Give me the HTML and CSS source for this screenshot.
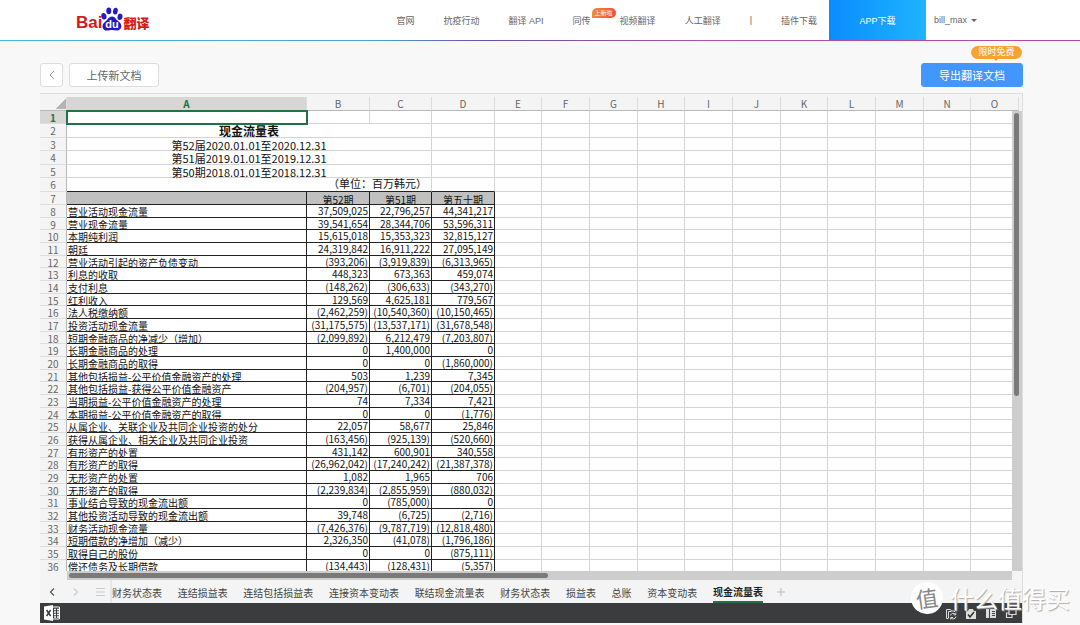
FILE: index.html
```html
<!DOCTYPE html>
<html lang="zh-CN">
<head>
<meta charset="utf-8">
<title>百度翻译</title>
<link rel="stylesheet" href="styles.css">
</head>
<body>
<header class="topbar">
  <a class="logo" href="#" aria-label="百度翻译">
    <span class="logo-bai">Bai</span>
    <svg class="logo-paw" viewBox="0 0 22 24" width="22" height="24" aria-hidden="true">
      <g fill="#2319c8">
        <ellipse cx="2.9" cy="9.3" rx="2.6" ry="3.3" transform="rotate(-12 2.9 9.3)"/>
        <ellipse cx="7.8" cy="3.8" rx="2.5" ry="3.4"/>
        <ellipse cx="14.4" cy="4.2" rx="2.4" ry="3.4" transform="rotate(10 14.4 4.2)"/>
        <ellipse cx="19" cy="9.8" rx="2.5" ry="3.2" transform="rotate(8 19 9.8)"/>
        <path d="M11 9.500c2 0 3.200 1.300 4.200 2.800 1.300 1.900 5.200 3.200 5.200 7 0 2.700-2 4.200-4.500 4.200-1.800 0-3.200-.5-4.900-.5s-3 .6-5 .6c-2.600 0-4.500-1.500-4.500-4.200 0-3.700 3.300-4.700 5-7 1.100-1.500 2.300-2.900 4.500-2.900z"/>
      </g>
      <text class="logo-du" x="11" y="21" text-anchor="middle">du</text>
    </svg>
    <span class="logo-fanyi">翻译</span>
  </a>
  <nav class="nav">
    <a href="#">官网</a>
    <a href="#">抗疫行动</a>
    <a href="#">翻译 API</a>
    <a class="has-tag" href="#">同传<span class="tag">上新啦</span></a>
    <a href="#">视频翻译</a>
    <a href="#">人工翻译</a>
    <span class="bar">|</span>
    <a href="#">插件下载</a>
  </nav>
  <a class="app-link" href="#">APP下载</a>
  <button class="user" type="button">bill_max<span class="caret"></span></button>
</header>

<main class="page">
  <div class="toolbar">
    <button class="btn back" type="button" aria-label="返回">
      <svg viewBox="0 0 8 10" width="8" height="10"><path d="M6 1 2 5l4 4" fill="none" stroke="#999" stroke-width="1"/></svg>
    </button>
    <button class="btn upload" type="button">上传新文档</button>
    <div class="export-wrap">
      <span class="free">限时免费</span>
      <button class="btn export" type="button">导出翻译文档</button>
    </div>
  </div>

  <section class="frame">
    <div class="viewport">
      <table class="sheet" id="sheet"></table>
      <div class="vbar"><div class="vthumb"></div></div>
    </div>
    <div class="hrow"><div class="hbar"><div class="hthumb"></div></div></div>
    <div class="tabbar">
      <div class="tab-tools">
        <button type="button" aria-label="上一个"><svg viewBox="0 0 8 10" width="8" height="10"><path d="M6 1.500 2.500 5 6 8.500" fill="none" stroke="#555" stroke-width="1.200"/></svg></button>
        <button type="button" aria-label="下一个"><svg viewBox="0 0 8 10" width="8" height="10"><path d="M2 1.500 5.500 5 2 8.500" fill="none" stroke="#ccc" stroke-width="1.200"/></svg></button>
        <button type="button" aria-label="工作表列表"><svg viewBox="0 0 10 10" width="10" height="10"><path d="M0 1.500h9M0 5h9M0 8.500h9" stroke="#ccc"/></svg></button>
      </div>
      <div class="tabs">
        <button type="button">财务状态表</button>
        <button type="button">连结损益表</button>
        <button type="button">连结包括损益表</button>
        <button type="button">连接资本变动表</button>
        <button type="button">联结现金流量表</button>
        <button type="button">财务状态表</button>
        <button type="button">损益表</button>
        <button type="button">总账</button>
        <button type="button">资本变动表</button>
        <button type="button" class="active">现金流量表</button>
      </div>
      <button class="add" type="button" aria-label="新建工作表"><svg viewBox="0 0 8 8" width="8" height="8"><path d="M4 0v8M0 4h8" stroke="#bbb"/></svg></button>
    </div>
    <footer class="status">
      <svg class="excel" viewBox="0 0 16 16" width="16" height="16">
        <path d="M0 1.600 9 0v16L0 14.400z" fill="#fff"/>
        <path d="M2.600 5l4 6M6.600 5l-4 6" stroke="#3a3c3e" stroke-width="1.500"/>
        <path d="M9 2h6.500v12H9" fill="none" stroke="#fff"/>
        <path d="M10 4.500h2M13 4.500h2M10 7h2M13 7h2M10 9.500h2M13 9.500h2M10 12h2M13 12h2" stroke="#fff" stroke-width="1.300"/>
      </svg>
      <div class="status-icons">
        <svg viewBox="0 0 12 12" width="12" height="12" fill="none" stroke="#ddd"><path d="M3.500 10.500h-2v-9h4l1 1.500h3v1"/><path d="M3.500 10V3.500h3"/><path d="M5.500 7.500a2.800 2.800 0 0 1 5-1M10.800 4.800v2H8.500M11 8.500a2.800 2.800 0 0 1-5 1.300M5.700 11.500v-2H8"/></svg>
        <svg viewBox="0 0 12 12" width="12" height="12"><path d="M1 3h2l1-2h4l1 2h2v8H1z" fill="#ddd"/><path d="m3 6.500 2 2.500 4-5" fill="none" stroke="#333" stroke-width="1.500"/></svg>
        <svg viewBox="0 0 12 12" width="12" height="12"><path d="M1 1h3v9H1zM5 1h6v9H5z" fill="#ddd"/><path d="M7 3.500h3M7 5.500h3M7 7.500h3" stroke="#444"/></svg>
        <svg viewBox="0 0 12 12" width="12" height="12" fill="none" stroke="#ddd" stroke-width="1.200"><path d="M4 1.500h7v5H4z"/><path d="M4 5H1.500v4.500H7V7"/></svg>
      </div>
    </footer>
  </section>
</main>

<div class="watermark"><span class="wm-mark">值</span><span class="wm-text">什么值得买</span></div>
<script src="sheet.js"></script>
</body>
</html>
```
FILE: styles.css
```css
* { box-sizing: border-box; }

body {
  margin: 0;
  height: 100vh;
  display: flex;
  flex-direction: column;
  background: #f8f8f8;
  color: #333;
  font-family: "Liberation Sans", "Noto Sans CJK SC", sans-serif;
  font-size: 10px;
  position: relative;
  overflow: hidden;
}

button {
  font: inherit;
  color: inherit;
  background: none;
  border: 0;
  padding: 0;
  white-space: nowrap;
}

a { color: inherit; text-decoration: none; }
svg { display: block; }

/* Top bar */
.topbar {
  flex: none;
  height: 41px;
  display: flex;
  background: #fff;
  border-bottom: 1px solid;
  border-image: linear-gradient(90deg, #45b8d8, #4aa0cc 35%, #6c4fa0 45%, #a855a8 65%, #b0489e) 1;
  font-size: 9px;
  color: #666;
}

.logo {
  display: flex;
  align-items: flex-end;
  padding: 0 0 9px 76px;
  color: #d7191c;
  font-weight: bold;
}
.logo-bai { font-size: 17px; line-height: 16px; }
.logo-paw { margin-left: -1px; }
.logo-du { font-size: 11px; fill: #fff; }
.logo-fanyi { font-size: 13px; line-height: 15px; font-weight: 900; }

.nav {
  margin-left: auto;
  padding-right: 12px;
  display: flex;
  align-items: center;
  gap: 29px;
  white-space: nowrap;
}
.has-tag { position: relative; }
.tag {
  position: absolute;
  left: 19px;
  top: -6px;
  width: 24px;
  height: 10px;
  border-radius: 5px 5px 5px 0;
  background: linear-gradient(90deg, #f58a3c, #ee4f3a);
  color: #fff;
  font-size: 6px;
  line-height: 10px;
  text-align: center;
}

.app-link {
  width: 97px;
  display: flex;
  align-items: center;
  justify-content: center;
  background: linear-gradient(90deg, #0a8cff, #1eb4ff);
  color: #fff;
}

.user {
  width: 154px;
  padding-left: 8px;
  display: flex;
  align-items: center;
  gap: 4px;
}
.caret {
  border: 3px solid transparent;
  border-top-color: #666;
  border-bottom: 0;
}

/* Document page */
.page {
  flex: 1;
  min-height: 0;
  display: flex;
  flex-direction: column;
  padding: 22px 57px 2px 40px;
}

.toolbar {
  flex: none;
  display: flex;
  gap: 6px;
  margin-bottom: 6px;
}
.btn {
  height: 24px;
  border-radius: 3px;
  border: 1px solid #ddd;
  background: #fff;
  color: #666;
  font-size: 11px;
}
.back {
  width: 23px;
  display: flex;
  align-items: center;
  justify-content: center;
}
.upload { width: 90px; }
.export-wrap { margin-left: auto; position: relative; }
.export {
  width: 102px;
  background: #4395ff;
  border-color: #4395ff;
  color: #fff;
}
.free {
  position: absolute;
  right: 1px;
  top: -17px;
  width: 51px;
  height: 13px;
  border-radius: 7px;
  background: #f5a52f;
  color: #fff;
  font-size: 9px;
  line-height: 13px;
  text-align: center;
}
.free::after {
  content: "";
  position: absolute;
  left: 23px;
  top: 13px;
  border: 2px solid transparent;
  border-top-color: #f5a52f;
  border-bottom: 0;
}

/* Spreadsheet */
.frame {
  flex: 1;
  min-height: 0;
  display: flex;
  flex-direction: column;
  padding-top: 3px;
  border-top: 1px solid #ddd;
  border-right: 1px solid #ddd;
  background: #f4f4f4;
  font-family: "Noto Sans CJK SC", sans-serif;
}
.viewport {
  flex: 1;
  min-height: 0;
  position: relative;
  overflow: hidden;
}

.sheet {
  width: 979px;
  table-layout: fixed;
  border-spacing: 0;
  color: #111;
}
.sheet th, .sheet td {
  padding: 0;
  white-space: nowrap;
  line-height: 11px;
  vertical-align: top;
  border-right: 1px solid #d4d4d4;
  border-bottom: 1px solid #d4d4d4;
}
.sheet td { background: #fff; }
.sheet th {
  color: #666;
  font-weight: normal;
  background: #f4f4f4;
  border-color: #ddd;
}
.sheet thead th {
  height: 14px;
  line-height: 13px;
  border-bottom-color: #b8b8b8;
}
.sheet tbody th {
  padding-top: 3px;
  line-height: 8px;
  border-right-color: #b8b8b8;
}
.sheet th.picked {
  background: #d6d6d4;
  color: #217346;
  font-weight: bold;
}
.sheet th.corner {
  background: linear-gradient(135deg, #f4f4f4 50%, #b4b4b4 50%) 16px 2px / 10px 10px no-repeat #f4f4f4;
}
.h12 { height: 12px; }
.h13 { height: 13px; }
.h14 { height: 14px; }

.sheet td.selected { outline: 2px solid #217346; outline-offset: -1px; position: relative; }
.sheet td.title { font-size: 12px; font-weight: bold; text-align: center; padding-top: 1px; line-height: 12px; }
.sheet td.period { font-size: 11px; text-align: center; padding-top: 2px; line-height: 10px; }
.sheet td.unit { font-size: 11px; text-align: right; padding-right: 4px; line-height: 10px; }
.sheet td.boxed { border-color: #222; }
.sheet td.top { border-bottom-color: #222; }
.sheet td.head { background: #c0c0c0; text-align: center; padding-top: 3px; line-height: 9px; }
.sheet td.label { padding: 3px 0 0 1px; line-height: 8px; }
.sheet td.num { padding-right: 1px; text-align: right; }

.vbar {
  position: absolute;
  right: 0;
  top: 14px;
  bottom: 0;
  width: 10px;
  padding: 2px;
  background: #cdcdcd;
}
.vthumb { width: 5px; height: 283px; border-radius: 3px; background: #7a7a7a; }

.hrow { flex: none; padding: 0 10px 0 27px; }
.hbar { height: 9px; padding: 2px; background: #cdcdcd; }
.hthumb { width: 479px; height: 5px; border-radius: 3px; background: #7a7a7a; }

/* Sheet tabs */
.tabbar { flex: none; height: 23px; display: flex; color: #444; }
.tab-tools {
  width: 72px;
  padding-left: 8px;
  display: flex;
  align-items: center;
  gap: 16px;
  border-right: 2px solid #e6e6e6;
}
.tabs { width: 651px; display: flex; justify-content: space-between; }
.tabs button { height: 23px; padding-top: 1px; }
.tabs .active { color: #222; font-weight: bold; border-bottom: 2px solid #217346; }
.add { margin-left: 14px; }

.status {
  flex: none;
  height: 20px;
  display: flex;
  align-items: center;
  justify-content: space-between;
  padding: 0 5px 0 4px;
  background: #3a3c3e;
}
.status-icons { display: flex; gap: 8px; padding-top: 2px; }

/* Watermark */
.watermark {
  position: absolute;
  right: 10px;
  bottom: 11px;
  display: flex;
  align-items: center;
  gap: 7px;
  color: #fff;
  font-family: "Noto Sans CJK SC", sans-serif;
  pointer-events: none;
}
.wm-mark {
  width: 32px;
  height: 32px;
  border-radius: 50%;
  background: #fff;
  color: #888;
  font-size: 22px;
  line-height: 31px;
  text-align: center;
  transform: rotate(-8deg);
}
.wm-text { font-size: 24px; line-height: 32px; text-shadow: 1px 1px 1px #aaa; }
```
FILE: sheet.js
```js
const widths = [27, 240, 63, 62, 63, 47, 48, 48, 47, 48, 48, 47, 48, 48, 47, 48];
const letters = "ABCDEFGHIJKLMNO".split("");

const merged = {
  2: ["title", "现金流量表"],
  3: ["period", "第52届2020.01.01至2020.12.31"],
  4: ["period", "第51届2019.01.01至2019.12.31"],
  5: ["period", "第50期2018.01.01至2018.12.31"],
  6: ["unit top", "（单位：百万韩元）"]
};

const rows = [
  ["营业活动现金流量", "37,509,025", "22,796,257", "44,341,217"],
  ["营业现金流量", "39,541,654", "28,344,706", "53,596,311"],
  ["本期纯利润", "15,615,018", "15,353,323", "32,815,127"],
  ["朝廷", "24,319,842", "16,911,222", "27,095,149"],
  ["营业活动引起的资产负债变动", "(393,206)", "(3,919,839)", "(6,313,965)"],
  ["利息的收取", "448,323", "673,363", "459,074"],
  ["支付利息", "(148,262)", "(306,633)", "(343,270)"],
  ["红利收入", "129,569", "4,625,181", "779,567"],
  ["法人税缴纳额", "(2,462,259)", "(10,540,360)", "(10,150,465)"],
  ["投资活动现金流量", "(31,175,575)", "(13,537,171)", "(31,678,548)"],
  ["短期金融商品的净减少（增加）", "(2,099,892)", "6,212,479", "(7,203,807)"],
  ["长期金融商品的处理", "0", "1,400,000", "0"],
  ["长期金融商品的取得", "0", "0", "(1,860,000)"],
  ["其他包括损益-公平价值金融资产的处理", "503", "1,239", "7,345"],
  ["其他包括损益-获得公平价值金融资产", "(204,957)", "(6,701)", "(204,055)"],
  ["当期损益-公平价值金融资产的处理", "74", "7,334", "7,421"],
  ["本期损益-公平价值金融资产的取得", "0", "0", "(1,776)"],
  ["从属企业、关联企业及共同企业投资的处分", "22,057", "58,677", "25,846"],
  ["获得从属企业、相关企业及共同企业投资", "(163,456)", "(925,139)", "(520,660)"],
  ["有形资产的处置", "431,142", "600,901", "340,558"],
  ["有形资产的取得", "(26,962,042)", "(17,240,242)", "(21,387,378)"],
  ["无形资产的处置", "1,082", "1,965", "706"],
  ["无形资产的取得", "(2,239,834)", "(2,855,959)", "(880,032)"],
  ["事业结合导致的现金流出额", "0", "(785,000)", "0"],
  ["其他投资活动导致的现金流出额", "39,748", "(6,725)", "(2,716)"],
  ["财务活动现金流量", "(7,426,376)", "(9,787,719)", "(12,818,480)"],
  ["短期借款的净增加（减少）", "2,326,350", "(41,078)", "(1,796,186)"],
  ["取得自己的股份", "0", "0", "(875,111)"],
  ["偿还债务及长期借款", "(134,443)", "(128,431)", "(5,357)"]
];

const td = (cls, text, span) =>
  `<td class="${cls}"${span ? ` colspan="${span}"` : ""}>${text}</td>`;
const empty = n => "<td></td>".repeat(n);

function rowHeight(r) {
  if (r < 7) return r % 2 ? 13 : 14;
  return r > 7 && (r - 8) % 3 === 1 ? 12 : 13;
}

function cells(r) {
  if (r === 1) return td("selected", "") + empty(14);
  if (merged[r]) return td(merged[r][0], merged[r][1], 3) + (r === 6 ? td("top", "") : empty(1)) + empty(11);
  if (r === 7) return ["", "第52期", "第51期", "第五十期"].map(t => td("boxed head", t)).join("") + empty(11);
  return rows[r - 8].map((t, i) => td(i ? "boxed num" : "boxed label", t)).join("") + empty(11);
}

let html = "<colgroup>" + widths.map(w => `<col style="width:${w}px">`).join("") + "</colgroup>";
html += '<thead><tr><th class="corner"></th>' +
  letters.map(l => `<th scope="col"${l === "A" ? ' class="picked"' : ""}>${l}</th>`).join("") + "</tr></thead><tbody>";
for (let r = 1; r <= 36; r++) {
  html += `<tr class="h${rowHeight(r)}"><th scope="row"${r === 1 ? ' class="picked"' : ""}>${r}</th>${cells(r)}</tr>`;
}
document.getElementById("sheet").innerHTML = html + "</tbody>";
```
